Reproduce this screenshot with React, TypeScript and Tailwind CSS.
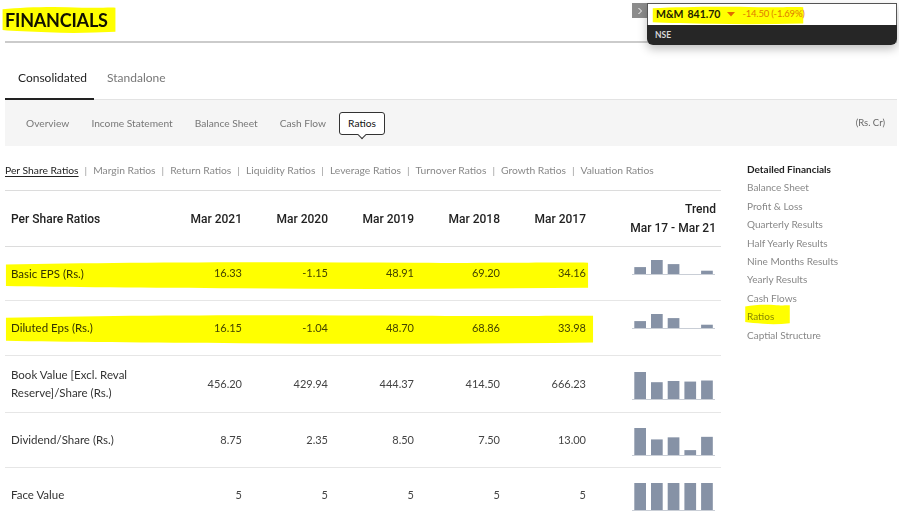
import React from 'react';

type Row = { label: string[]; vals: string[]; trend: number[]; h: string; marker?: string };

const rows: Row[] = [
  { label: ['Basic EPS (Rs.)'], vals: ['16.33', '-1.15', '48.91', '69.20', '34.16'], trend: [16.33, -1.15, 48.91, 69.2, 34.16], h: 'h-[54px]', marker: 'left-[-2px] top-[14px] w-[588px] h-[29px]' },
  { label: ['Diluted Eps (Rs.)'], vals: ['16.15', '-1.04', '48.70', '68.86', '33.98'], trend: [16.15, -1.04, 48.7, 68.86, 33.98], h: 'h-[55px]', marker: 'left-[-2px] top-[13px] w-[593px] h-[31px]' },
  { label: ['Book Value [Excl. Reval', 'Reserve]/Share (Rs.)'], vals: ['456.20', '429.94', '444.37', '414.50', '666.23'], trend: [456.2, 429.94, 444.37, 414.5, 666.23], h: 'h-[57px]' },
  { label: ['Dividend/Share (Rs.)'], vals: ['8.75', '2.35', '8.50', '7.50', '13.00'], trend: [8.75, 2.35, 8.5, 7.5, 13], h: 'h-[55px]' },
  { label: ['Face Value'], vals: ['5', '5', '5', '5', '5'], trend: [5, 5, 5, 5, 5], h: 'h-[55px]' },
];

const years = ['Mar 2021', 'Mar 2020', 'Mar 2019', 'Mar 2018', 'Mar 2017'];
const ratioTabs = ['Per Share Ratios', 'Margin Ratios', 'Return Ratios', 'Liquidity Ratios', 'Leverage Ratios', 'Turnover Ratios', 'Growth Ratios', 'Valuation Ratios'];
const sideLinks = ['Balance Sheet', 'Profit & Loss', 'Quarterly Results', 'Half Yearly Results', 'Nine Months Results', 'Yearly Results', 'Cash Flows', 'Ratios', 'Captial Structure'];

function Marker({ className }: { className: string }) {
  return (
    <svg className={`pointer-events-none absolute mix-blend-multiply ${className}`} viewBox="0 0 100 100" preserveAspectRatio="none">
      <path d="M0.5 12 C20 4 45 2 70 6 C85 8 95 4 99.5 6 L99.5 92 C80 96 60 98 40 94 C25 92 10 90 0.5 86 Z" fill="#ffff00" />
    </svg>
  );
}

function Trend({ values }: { values: number[] }) {
  const data = [...values].reverse();
  const hasNeg = data.some((v) => v < 0);
  const max = Math.max(...data.map((v) => Math.abs(v)));
  const base = hasNeg ? 16 : 31;
  const scale = hasNeg ? 14 : 27;
  return (
    <svg width="83" height="32" viewBox="0 0 83 32">
      {data.map((v, i) => {
        const h = (Math.abs(v) / max) * scale;
        return <rect key={i} x={2.3 + i * 16.7} y={v >= 0 ? base - h : base} width="11.7" height={h} fill="#8692a6" />;
      })}
      <line x1="0" x2="83" y1={base + 0.5} y2={base + 0.5} stroke="#c9ced6" strokeWidth="1" />
    </svg>
  );
}

export default function App() {
  return (
    <div className="relative w-[899px] h-[520px] overflow-hidden bg-white font-['Lato',sans-serif] text-[#222]">
      <div className="pl-[5px] pr-[2px]">
        {/* title */}
        <div className="h-[43px] border-b-2 border-[#cbcbcb] pt-[8px]">
          <span className="relative inline-block text-[18px] font-bold leading-[24px] tracking-[-0.2px] text-[#111]">
            FINANCIALS
            <Marker className="left-[-3px] top-[-2px] w-[114px] h-[28px]" />
          </span>
        </div>

        {/* consolidated / standalone */}
        <div className="flex pt-[23px] border-b border-[#e3e3e3]">
          <div className="w-[89px] h-[34px] -mb-px border-b-2 border-[#222] pl-[13px] text-[12px] leading-[24px] text-[#222]">Consolidated</div>
          <div className="pl-[13px] text-[12px] leading-[24px] text-[#777]">Standalone</div>
        </div>

        {/* statement tabs */}
        <div className="h-[46px] bg-[#f5f5f5] flex items-center pl-[12px] pr-[12px] text-[10.2px] text-[#777]">
          <div className="flex items-center gap-[4px]">
            {['Overview', 'Income Statement', 'Balance Sheet', 'Cash Flow'].map((t) => (
              <span key={t} className="px-[9px] leading-[22px]">{t}</span>
            ))}
            <span className="relative px-[8px] h-[23px] leading-[21px] border border-[#333] rounded-[3px] bg-white text-[#111]">
              Ratios
              <span className="absolute left-1/2 -ml-[3px] bottom-[-4px] w-[6px] h-[6px] rotate-45 bg-white border-r border-b border-[#333]" />
            </span>
          </div>
          <span className="ml-auto text-[9.5px] text-[#666]">(Rs. Cr)</span>
        </div>

        <div className="flex gap-[26px]">
          {/* table */}
          <div className="w-[716px]">
            <div className="h-[44px] pt-[17px] flex items-start text-[10.3px] leading-[14px] text-[#888]">
              {ratioTabs.map((t, i) => (
                <React.Fragment key={t}>
                  {i > 0 && <span className="mx-[6px] text-[#999]">|</span>}
                  <span className={i === 0 ? 'text-[#222] underline underline-offset-2' : ''}>{t}</span>
                </React.Fragment>
              ))}
            </div>

            <div className="flex h-[57px] items-center border-t border-b border-[#dcdcdc] font-['Roboto',sans-serif] font-medium text-[12px] text-[#222]">
              <div className="w-[151px] pl-[6px]">Per Share Ratios</div>
              {years.map((y) => (
                <div key={y} className="w-[86px] text-right">{y}</div>
              ))}
              <div className="flex-1 text-right pr-[5px] leading-[19px]">
                <div>Trend</div>
                <div>Mar 17 - Mar 21</div>
              </div>
            </div>

            {rows.map((r) => (
              <div key={r.label[0]} className={`relative flex items-center ${r.h} border-b border-[#e6e6e6]`}>
                <div className="w-[151px] pl-[6px] text-[11.5px] leading-[18px] text-[#333]">
                  {r.label.map((l) => (
                    <div key={l}>{l}</div>
                  ))}
                </div>
                {r.vals.map((v, i) => (
                  <div key={i} className="w-[86px] text-right text-[11px] text-[#444]">{v}</div>
                ))}
                <div className="flex-1 flex justify-end pr-[6px]">
                  <Trend values={r.trend} />
                </div>
                {r.marker && <Marker className={r.marker} />}
              </div>
            ))}
          </div>

          {/* sidebar */}
          <div className="pt-[14px] text-[10px] leading-[18.4px] text-[#888]">
            <div className="font-bold text-[#222]">Detailed Financials</div>
            {sideLinks.map((l) => (
              <div key={l} className="relative">
                {l}
                {l === 'Ratios' && <Marker className="left-[-2px] top-[-3px] w-[45px] h-[21px]" />}
              </div>
            ))}
          </div>
        </div>
      </div>

      {/* quote popup */}
      <div className="absolute left-[632px] top-[3px] flex">
        <div className="w-[15px] h-[15px] bg-[#8c8c8c] flex items-center justify-center">
          <svg width="6" height="8" viewBox="0 0 6 8">
            <polyline points="1.5,1 4.5,4 1.5,7" fill="none" stroke="#fff" strokeWidth="1" />
          </svg>
        </div>
        <div className="w-[250px] rounded-b-[6px] shadow-[0_4px_10px_rgba(0,0,0,0.25)]">
          <div className="relative h-[22px] bg-white border border-[#555] border-b-0 flex items-center pl-[8px]">
            <span className="text-[10.5px] font-bold text-[#222]">M&amp;M</span>
            <span className="ml-[4px] text-[10.5px] font-bold text-[#222]">841.70</span>
            <svg className="ml-[7px]" width="8" height="5" viewBox="0 0 8 5">
              <polygon points="0,0 8,0 4,4.5" fill="#e06a1a" />
            </svg>
            <span className="ml-[7px] text-[9.5px] text-[#e07a12] tracking-[-0.2px]">-14.50 (-1.69%)</span>
            <Marker className="left-[4px] top-[2px] w-[152px] h-[19px]" />
          </div>
          <div className="h-[20px] bg-[#262626] rounded-b-[6px] pl-[8px] text-[8.5px] font-bold leading-[20px] text-[#d8d8d8]">NSE</div>
        </div>
      </div>
    </div>
  );
}
